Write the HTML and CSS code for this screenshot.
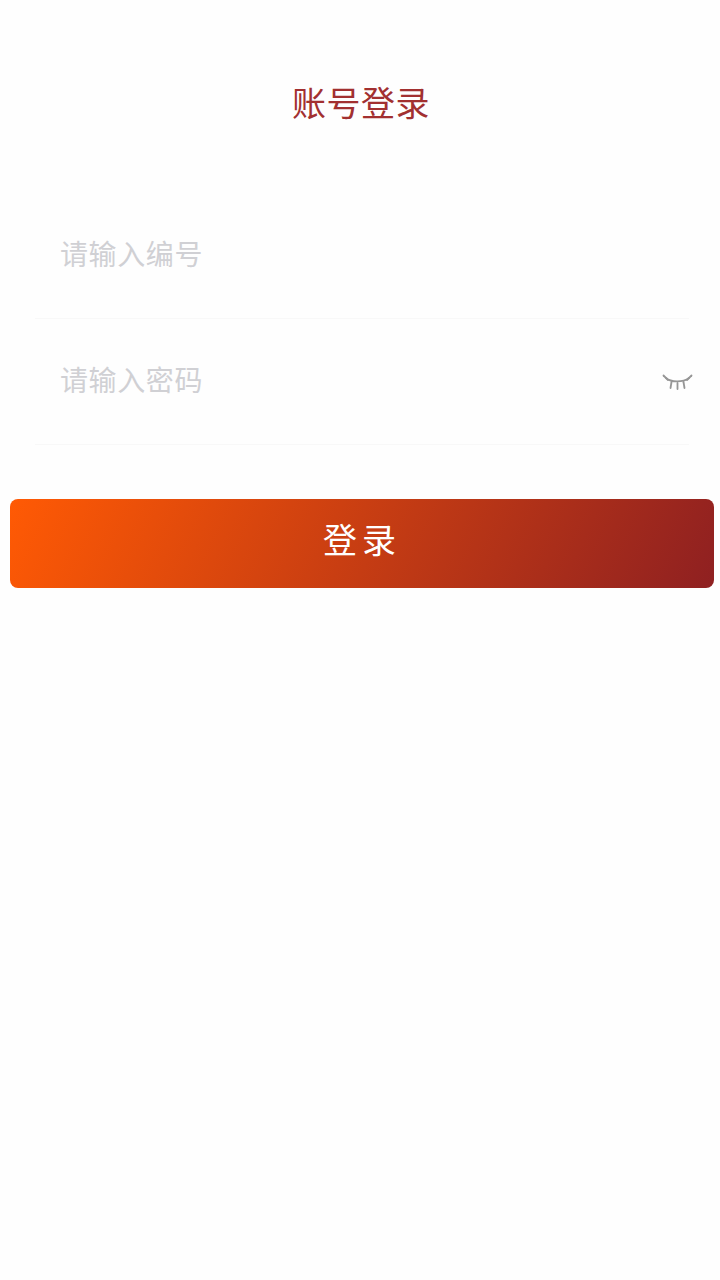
FILE: index.html
```html
<!DOCTYPE html>
<html lang="zh-CN">
<head>
    <meta charset="UTF-8">
    <meta name="viewport" content="width=device-width, initial-scale=1.0">
    <title>账号登录</title>
    <link rel="stylesheet" href="styles.css">
</head>
<body>
    <header class="title">账号登录</header>
    <main>
        <form class="login-form">
            <div class="field">
                <input class="field-input" type="text" placeholder="请输入编号">
            </div>
            <div class="field">
                <input class="field-input" type="password" placeholder="请输入密码">
                <svg class="eye" width="32" height="16" viewBox="0 0 32 16" fill="none" stroke="#969696" stroke-width="1.8" stroke-linecap="round">
                    <path d="M4 4C9 8.5 21 8.5 27 4"/>
                    <path d="M1.5 1.5L6 6"/>
                    <path d="M9.5 8L8.5 14"/>
                    <path d="M15.5 9V15"/>
                    <path d="M21.5 8L22.5 14"/>
                    <path d="M29.5 1.5L25 6"/>
                </svg>
            </div>
            <button class="login-btn" type="button"><span class="login-btn-text">登录</span></button>
        </form>
    </main>
</body>
</html>
```

FILE: styles.css
```css
body {
    margin: 0;
    padding: 0;
    background-color: #fefefe;
    font-family: "Liberation Sans", "Noto Sans CJK SC", sans-serif;
}
.title {
    padding-top: 80px;
    padding-left: 2px;
    height: 48px;
    line-height: 48px;
    text-align: center;
    font-size: 34px;
    letter-spacing: 0.5px;
    color: #a23030;
}
.login-form {
    padding-top: 66px;
    display: flex;
    flex-direction: column;
    align-items: flex-start;
}
.field {
    width: 654px;
    height: 125px;
    margin-left: 35px;
    margin-bottom: 1px;
    padding-left: 25px;
    box-sizing: border-box;
    border-bottom: 1px solid #f8f8f8;
    display: flex;
    align-items: center;
}
.field-input {
    flex: 1;
    min-width: 0;
    border: none;
    outline: none;
    padding: 0;
    height: 50px;
    background: transparent;
    font-family: inherit;
    font-size: 28px;
    letter-spacing: 0.6px;
}
.field-input::placeholder {
    color: #d0d0d4;
    opacity: 1;
}
.eye {
    margin-right: -5px;
    flex-shrink: 0;
}
.login-btn {
    width: 704px;
    height: 89px;
    margin-top: 53px;
    margin-left: 10px;
    padding: 0;
    border: none;
    border-radius: 8px;
    background: linear-gradient(115deg, #ff5a04, #8f2021);
    color: #fff;
    font-family: inherit;
    font-size: 34px;
    letter-spacing: 5px;
}
.login-btn-text {
    display: block;
    margin-top: -10px;
}
```
